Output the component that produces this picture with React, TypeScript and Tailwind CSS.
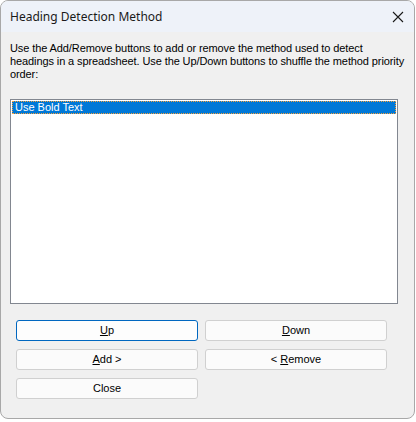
import type { ReactNode } from 'react'

function Btn({ children, focused }: { children: ReactNode; focused?: boolean }) {
  return (
    <button
      type="button"
      className={`h-[21px] w-[182px] rounded-[3px] border text-[11px] leading-none text-black ${
        focused ? 'border-[#0067c0] bg-[#fdfdfd]' : 'border-[#d0d0d0] bg-[#fbfbfb]'
      }`}
    >
      {children}
    </button>
  )
}

export default function App() {
  return (
    <div className="h-[422px] w-[416px] bg-white" style={{ fontFamily: '"Liberation Sans", Arial, sans-serif' }}>
      <div className="flex h-[419px] w-[415px] flex-col overflow-hidden rounded-[8px] border border-[#a8a8a8] bg-[#f0f0f0]">
        {/* title bar */}
        <div className="flex h-[31px] shrink-0 items-center justify-between bg-[#eef2f9] pl-[9px] pr-[8px]">
          <span className="text-[12px] text-[#1a1a1a]" style={{ fontFamily: '"Noto Sans", sans-serif' }}>
            Heading Detection Method
          </span>
          <svg width="12" height="12" viewBox="0 0 12 12" className="mr-[2px]">
            <path d="M1 1L11 11M11 1L1 11" stroke="#1a1a1a" strokeWidth="1.1" />
          </svg>
        </div>

        <div className="flex flex-col px-[9px] pt-[10px]">
          <p className="w-[402px] text-[11px] leading-[13px] tracking-[-0.1px] text-black">
            Use the Add/Remove buttons to add or remove the method used to detect
            <br />
            headings in a spreadsheet. Use the Up/Down buttons to shuffle the method priority
            <br />
            order:
          </p>

          <div className="mt-[18px] h-[205px] w-[388px] border border-[#828790] bg-white p-[1px]">
            <div className="h-[13px] border border-dotted border-[#f7a13a] bg-[#0078d7] pl-[2px] text-[11px] leading-[11px] text-white">
              Use Bold Text
            </div>
          </div>

          <div className="mt-[16px] grid grid-cols-[182px_182px] gap-x-[7px] gap-y-[8px] pl-[6px]">
            <Btn focused>
              <u>U</u>p
            </Btn>
            <Btn>
              <u>D</u>own
            </Btn>
            <Btn>
              <u>A</u>dd &gt;
            </Btn>
            <Btn>
              &lt; <u>R</u>emove
            </Btn>
            <Btn>Close</Btn>
          </div>
        </div>
      </div>
    </div>
  )
}
